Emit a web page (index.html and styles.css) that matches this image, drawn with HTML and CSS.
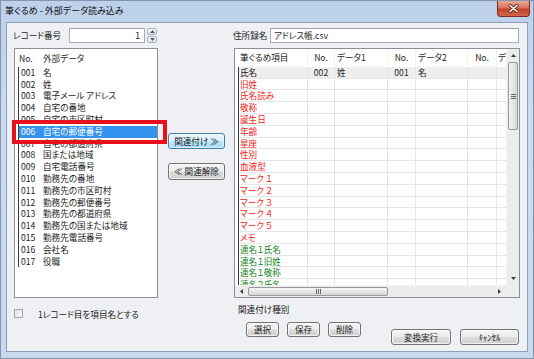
FILE: index.html
```html
<!DOCTYPE html>
<html lang="ja">
<head>
<meta charset="utf-8">
<title>筆ぐるめ - 外部データ読み込み</title>
<link rel="stylesheet" href="styles.css">
</head>
<body>
<div class="window">
  <div class="titlebar">
    <span class="title">筆ぐるめ - 外部データ読み込み</span>
    <span class="close"><svg width="11" height="9" viewBox="0 0 11 9"><path d="M2 1.5 L9 7.5 M9 1.5 L2 7.5" stroke="#6a2418" stroke-width="3" stroke-linecap="round"/><path d="M2 1.5 L9 7.5 M9 1.5 L2 7.5" stroke="#ffffff" stroke-width="1.6" stroke-linecap="round"/></svg></span>
  </div>
  <div class="client">
    <div class="toprow">
      <span class="lbl lbl-rec">レコード番号</span>
      <div class="input input-rec">1</div>
      <div class="spin">
        <span class="spin-btn"><svg width="5" height="3" viewBox="0 0 5 3"><path d="M0 3 L2.5 0 L5 3Z" fill="#4a5a72"/></svg></span>
        <span class="spin-btn"><svg width="5" height="3" viewBox="0 0 5 3"><path d="M0 0 L2.5 3 L5 0Z" fill="#4a5a72"/></svg></span>
      </div>
      <span class="lbl lbl-file">住所録名</span>
      <div class="input input-file">アドレス帳.csv</div>
    </div>

    <div class="mainrow">
      <div class="leftlist">
        <div class="lhead"><span class="lh-no">No.</span><span class="lh-data">外部データ</span></div>
        <div class="lrows">
          <div class="lrow"><span class="c-no">001</span><span>名</span></div>
          <div class="lrow"><span class="c-no">002</span><span>姓</span></div>
          <div class="lrow"><span class="c-no">003</span><span>電子メール アドレス</span></div>
          <div class="lrow"><span class="c-no">004</span><span>自宅の番地</span></div>
          <div class="lrow"><span class="c-no">005</span><span>自宅の市区町村</span></div>
          <div class="lrow sel"><span class="c-no">006</span><span>自宅の郵便番号</span></div>
          <div class="lrow"><span class="c-no">007</span><span>自宅の都道府県</span></div>
          <div class="lrow"><span class="c-no">008</span><span>国または地域</span></div>
          <div class="lrow"><span class="c-no">009</span><span>自宅電話番号</span></div>
          <div class="lrow"><span class="c-no">010</span><span>勤務先の番地</span></div>
          <div class="lrow"><span class="c-no">011</span><span>勤務先の市区町村</span></div>
          <div class="lrow"><span class="c-no">012</span><span>勤務先の郵便番号</span></div>
          <div class="lrow"><span class="c-no">013</span><span>勤務先の都道府県</span></div>
          <div class="lrow"><span class="c-no">014</span><span>勤務先の国または地域</span></div>
          <div class="lrow"><span class="c-no">015</span><span>勤務先電話番号</span></div>
          <div class="lrow"><span class="c-no">016</span><span>会社名</span></div>
          <div class="lrow"><span class="c-no">017</span><span>役職</span></div>
        </div>
      </div>
      <div class="redbox"></div>

      <div class="midcol">
        <button class="btn btn-default btn-assoc">関連付け ≫</button>
        <button class="btn btn-unassoc">≪ 関連解除</button>
      </div>

      <div class="rightlist">
        <div class="rview">
          <div class="rtable">
            <div class="rhead">
              <span class="c1">筆ぐるめ項目</span><span class="c2">No.</span><span class="c3">データ1</span><span class="c4">No.</span><span class="c5">データ2</span><span class="c6">No.</span><span class="c7">デ</span>
            </div>
            <div class="rrows">
              <div class="rrow first"><span class="c1">氏名</span><span class="c2">002</span><span class="c3">姓</span><span class="c4">001</span><span class="c5">名</span><span class="c6"></span><span class="c7"></span></div>
              <div class="rrow red"><span class="c1">旧姓</span><span class="c2"></span><span class="c3"></span><span class="c4"></span><span class="c5"></span><span class="c6"></span><span class="c7"></span></div>
              <div class="rrow red"><span class="c1">氏名読み</span><span class="c2"></span><span class="c3"></span><span class="c4"></span><span class="c5"></span><span class="c6"></span><span class="c7"></span></div>
              <div class="rrow red"><span class="c1">敬称</span><span class="c2"></span><span class="c3"></span><span class="c4"></span><span class="c5"></span><span class="c6"></span><span class="c7"></span></div>
              <div class="rrow red"><span class="c1">誕生日</span><span class="c2"></span><span class="c3"></span><span class="c4"></span><span class="c5"></span><span class="c6"></span><span class="c7"></span></div>
              <div class="rrow red"><span class="c1">年齢</span><span class="c2"></span><span class="c3"></span><span class="c4"></span><span class="c5"></span><span class="c6"></span><span class="c7"></span></div>
              <div class="rrow red"><span class="c1">星座</span><span class="c2"></span><span class="c3"></span><span class="c4"></span><span class="c5"></span><span class="c6"></span><span class="c7"></span></div>
              <div class="rrow red"><span class="c1">性別</span><span class="c2"></span><span class="c3"></span><span class="c4"></span><span class="c5"></span><span class="c6"></span><span class="c7"></span></div>
              <div class="rrow red"><span class="c1">血液型</span><span class="c2"></span><span class="c3"></span><span class="c4"></span><span class="c5"></span><span class="c6"></span><span class="c7"></span></div>
              <div class="rrow red"><span class="c1">マーク １</span><span class="c2"></span><span class="c3"></span><span class="c4"></span><span class="c5"></span><span class="c6"></span><span class="c7"></span></div>
              <div class="rrow red"><span class="c1">マーク ２</span><span class="c2"></span><span class="c3"></span><span class="c4"></span><span class="c5"></span><span class="c6"></span><span class="c7"></span></div>
              <div class="rrow red"><span class="c1">マーク ３</span><span class="c2"></span><span class="c3"></span><span class="c4"></span><span class="c5"></span><span class="c6"></span><span class="c7"></span></div>
              <div class="rrow red"><span class="c1">マーク ４</span><span class="c2"></span><span class="c3"></span><span class="c4"></span><span class="c5"></span><span class="c6"></span><span class="c7"></span></div>
              <div class="rrow red"><span class="c1">マーク ５</span><span class="c2"></span><span class="c3"></span><span class="c4"></span><span class="c5"></span><span class="c6"></span><span class="c7"></span></div>
              <div class="rrow red"><span class="c1">メモ</span><span class="c2"></span><span class="c3"></span><span class="c4"></span><span class="c5"></span><span class="c6"></span><span class="c7"></span></div>
              <div class="rrow green"><span class="c1">連名１氏名</span><span class="c2"></span><span class="c3"></span><span class="c4"></span><span class="c5"></span><span class="c6"></span><span class="c7"></span></div>
              <div class="rrow green"><span class="c1">連名１旧姓</span><span class="c2"></span><span class="c3"></span><span class="c4"></span><span class="c5"></span><span class="c6"></span><span class="c7"></span></div>
              <div class="rrow green"><span class="c1">連名１敬称</span><span class="c2"></span><span class="c3"></span><span class="c4"></span><span class="c5"></span><span class="c6"></span><span class="c7"></span></div>
              <div class="rrow green"><span class="c1">連名２氏名</span><span class="c2"></span><span class="c3"></span><span class="c4"></span><span class="c5"></span><span class="c6"></span><span class="c7"></span></div>
            </div>
          </div>
          <div class="vscroll">
            <span class="sb-btn"><svg width="5" height="3" viewBox="0 0 5 3"><path d="M0 3 L2.5 0 L5 3Z" fill="#3c3c3c"/></svg></span>
            <span class="vthumb"><span class="grip-h"></span><span class="grip-h"></span><span class="grip-h"></span></span>
            <span class="sb-fill"></span>
            <span class="sb-btn"><svg width="5" height="3" viewBox="0 0 5 3"><path d="M0 0 L2.5 3 L5 0Z" fill="#3c3c3c"/></svg></span>
          </div>
        </div>
        <div class="hrow">
          <div class="hscroll">
            <span class="sb-btn"><svg width="3" height="5" viewBox="0 0 3 5"><path d="M3 0 L0 2.5 L3 5Z" fill="#3c3c3c"/></svg></span>
            <span class="hthumb"><span class="grip-v"></span><span class="grip-v"></span><span class="grip-v"></span></span>
            <span class="sb-fill"></span>
            <span class="sb-btn"><svg width="3" height="5" viewBox="0 0 3 5"><path d="M0 0 L3 2.5 L0 5Z" fill="#3c3c3c"/></svg></span>
          </div>
          <div class="corner"></div>
        </div>
      </div>
    </div>

    <div class="bottomrow">
      <div class="chkarea">
        <span class="chk"></span>
        <span class="chk-lbl">1レコード目を項目名とする</span>
      </div>
      <div class="group">
        <div class="group-lbl">関連付け種別</div>
        <div class="group-btns">
          <button class="btn btn-small">選択</button>
          <button class="btn btn-small">保存</button>
          <button class="btn btn-small">削除</button>
        </div>
      </div>
      <div class="actions">
        <button class="btn btn-exec">変換実行</button>
        <button class="btn btn-cancel">ｷｬﾝｾﾙ</button>
      </div>
    </div>
  </div>
</div>
</body>
</html>
```

FILE: styles.css
```css
* { box-sizing: border-box; }
html, body { margin: 0; padding: 0; }
body {
  width: 534px;
  height: 359px;
  overflow: hidden;
  font-family: "Noto Sans CJK JP", "Liberation Sans", sans-serif;
  font-size: 8.6px;
  font-feature-settings: "palt";
  color: #1c1c1c;
  background: #c6d7ec;
}

.window {
  width: 534px;
  height: 359px;
  display: flex;
  flex-direction: column;
  border: 1px solid #8294ae;
  background: linear-gradient(180deg, #bcd0ea 0%, #cadbef 30%, #c8d8ed 100%);
}

/* title bar */
.titlebar {
  height: 21px;
  flex: none;
  display: flex;
  justify-content: space-between;
  align-items: flex-start;
  padding-left: 4px;
}
.title {
  font-size: 9px;
  line-height: 20px;
  color: #0d0d0d;
}
.close {
  width: 33px;
  height: 16px;
  margin-right: 3px;
  border: 1px solid #7d2a1e;
  border-top: none;
  border-radius: 0 0 4px 4px;
  background: linear-gradient(180deg, #e9a99b 0%, #d9735d 45%, #c2412a 55%, #d2684c 100%);
  display: flex;
  align-items: center;
  justify-content: center;
}

/* client area */
.client {
  flex: 1;
  margin: 0 5px 6px 5px;
  border: 1px solid #8d9fb9;
  background: #eef0f3;
  display: flex;
  flex-direction: column;
}

.toprow {
  margin-top: 5px;
  height: 15px;
  flex: none;
  display: flex;
  align-items: center;
  padding-left: 6px;
}
.lbl { line-height: 15px; white-space: nowrap; }
.lbl-rec { width: 56px; }
.lbl-file { width: 37px; margin-left: 76px; }
.input {
  height: 15px;
  border: 1px solid #abb0b8;
  border-top-color: #9da3ac;
  background: #fff;
  line-height: 13px;
  white-space: nowrap;
}
.input-rec { width: 76px; text-align: right; padding-right: 4px; }
.input-file { width: 249px; padding-left: 3px; }
.spin {
  margin-left: 2px;
  width: 10px;
  height: 15px;
  display: flex;
  flex-direction: column;
  gap: 1px;
}
.spin-btn {
  flex: 1;
  border: 1px solid #a9b1bc;
  border-radius: 2px;
  background: linear-gradient(180deg, #fbfbfb, #e2e5ea);
  display: flex;
  align-items: center;
  justify-content: center;
}

/* main row */
.mainrow {
  position: relative;
  margin-top: 5px;
  height: 250px;
  flex: none;
  display: flex;
}

.leftlist {
  margin-left: 7px;
  width: 144px;
  height: 250px;
  border: 1px solid #8a9099;
  background: #fff;
}
.lhead {
  height: 17.8px;
  display: flex;
  align-items: center;
}
.lh-no { width: 28px; padding-left: 4px; }
.lrows {
  margin-left: 3px;
  border-left: 1px solid #3a3a3a;
}
.lrow {
  height: 11.8px;
  line-height: 11.8px;
  display: flex;
  white-space: nowrap;
}
.c-no { width: 24px; padding-left: 2px; }
.lrow.sel {
  background: #3592ee;
  color: #fff;
}
.redbox {
  position: absolute;
  left: 5px;
  top: 72px;
  width: 155px;
  height: 24px;
  border: 4px solid #e8101a;
}

.midcol {
  width: 76px;
  flex: none;
  display: flex;
  flex-direction: column;
  align-items: flex-start;
  padding-top: 85px;
  padding-left: 10px;
}

.btn {
  font-family: inherit;
  font-size: 8.6px;
  font-feature-settings: "palt";
  color: #1c1c1c;
  padding: 0;
  margin: 0;
  border: 1px solid #727272;
  border-radius: 3px;
  background: linear-gradient(180deg, #f4f4f4 0%, #ececec 48%, #dcdcdc 52%, #d0d0d0 100%);
  box-shadow: inset 0 0 0 1px rgba(255,255,255,0.7);
  line-height: 1;
  white-space: nowrap;
  display: flex;
  align-items: center;
  justify-content: center;
}
.btn-default {
  border-color: #3c7fb1;
  background: linear-gradient(180deg, #eaf6fd 0%, #d9f0fc 48%, #bee6fd 52%, #a7d9f5 100%);
  box-shadow: inset 0 0 0 1px rgba(255,255,255,0.6);
}
.btn-assoc { width: 57px; height: 16px; }
.btn-unassoc { width: 57px; height: 17px; margin-top: 14px; }

/* right list */
.rightlist {
  width: 286px;
  height: 250px;
  flex: none;
  border: 1px solid #8a9099;
  background: #fff;
  display: flex;
  flex-direction: column;
}
.rview {
  height: 236px;
  display: flex;
}
.rtable {
  width: 271px;
  height: 236px;
  overflow: hidden;
}
.rhead {
  height: 17.8px;
  display: flex;
  align-items: center;
  margin-left: 3px;
  border-left: 1px solid transparent;
  white-space: nowrap;
}
.rhead span { border-right: 1px solid #f0f0f0; line-height: 17.8px; }
.rrows {
  margin-left: 3px;
  border-left: 1px solid #3a3a3a;
}
.rrow {
  height: 11.8px;
  display: flex;
  white-space: nowrap;
}
.rrow span {
  line-height: 11px;
  border-bottom: 1px solid #e6e6e6;
  border-right: 1px solid #e6e6e6;
}
.rrow.first { background: #eeeeee; }
.rrow.red { color: #f01c1c; }
.rrow.green { color: #14871e; }
.c1, .c2, .c3, .c4, .c5, .c6, .c7 { flex: none; overflow: hidden; }
.c1 { width: 69px; padding-left: 1px; }
.c2 { width: 27px; text-align: center; }
.c3 { width: 53px; padding-left: 2px; }
.c4 { width: 28px; text-align: center; }
.c5 { width: 52px; padding-left: 2px; }
.c6 { width: 29px; text-align: center; }
.c7 { width: 40px; padding-left: 1px; }

.vscroll {
  width: 13px;
  display: flex;
  flex-direction: column;
  background: #ececec;
  border-left: 1px solid #f4f4f4;
}
.sb-btn {
  flex: none;
  width: 13px;
  height: 13px;
  display: flex;
  align-items: center;
  justify-content: center;
}
.sb-fill { flex: 1; }
.vthumb {
  flex: none;
  height: 68px;
  margin: 0 1px;
  border: 1px solid #999;
  border-radius: 2px;
  background: linear-gradient(90deg, #f3f3f3 0%, #e6e6e6 50%, #d6d6d6 100%);
  display: flex;
  flex-direction: column;
  align-items: center;
  justify-content: center;
  gap: 1px;
}
.grip-h { width: 5px; height: 1px; background: #666; }

.hrow {
  height: 12px;
  display: flex;
}
.hscroll {
  width: 271px;
  display: flex;
  background: #ececec;
  border-top: 1px solid #f4f4f4;
}
.hscroll .sb-btn { height: 11px; }
.hthumb {
  flex: none;
  width: 140px;
  margin: 1px 0;
  border: 1px solid #999;
  border-radius: 2px;
  background: linear-gradient(180deg, #f3f3f3 0%, #e6e6e6 50%, #d6d6d6 100%);
  display: flex;
  align-items: center;
  justify-content: center;
  gap: 1px;
}
.grip-v { width: 1px; height: 5px; background: #666; }
.corner { width: 13px; background: #eeeeee; }

/* bottom */
.bottomrow {
  flex: 1;
  display: flex;
}
.chkarea {
  width: 226px;
  flex: none;
  display: flex;
  align-items: center;
  align-self: flex-start;
  height: 13px;
  margin-top: 9px;
  padding-left: 7px;
}
.chk {
  width: 9px;
  height: 9px;
  border: 1px solid #a3a8ae;
  background: linear-gradient(135deg, #dfe2e6, #f8f9fa);
}
.chk-lbl { margin-left: 15px; white-space: nowrap; }

.group {
  width: 136px;
  flex: none;
  padding-top: 6px;
  padding-left: 5px;
}
.group-lbl { height: 11px; line-height: 11px; }
.group-btns {
  display: flex;
  gap: 8px;
  margin-top: 7px;
  padding-left: 8px;
}
.btn-small { width: 33px; height: 15px; }

.actions {
  display: flex;
  gap: 9px;
  margin-left: 22px;
  margin-top: 31px;
  align-self: flex-start;
}
.btn-exec { width: 60px; height: 16px; }
.btn-cancel { width: 59px; height: 16px; }
```
